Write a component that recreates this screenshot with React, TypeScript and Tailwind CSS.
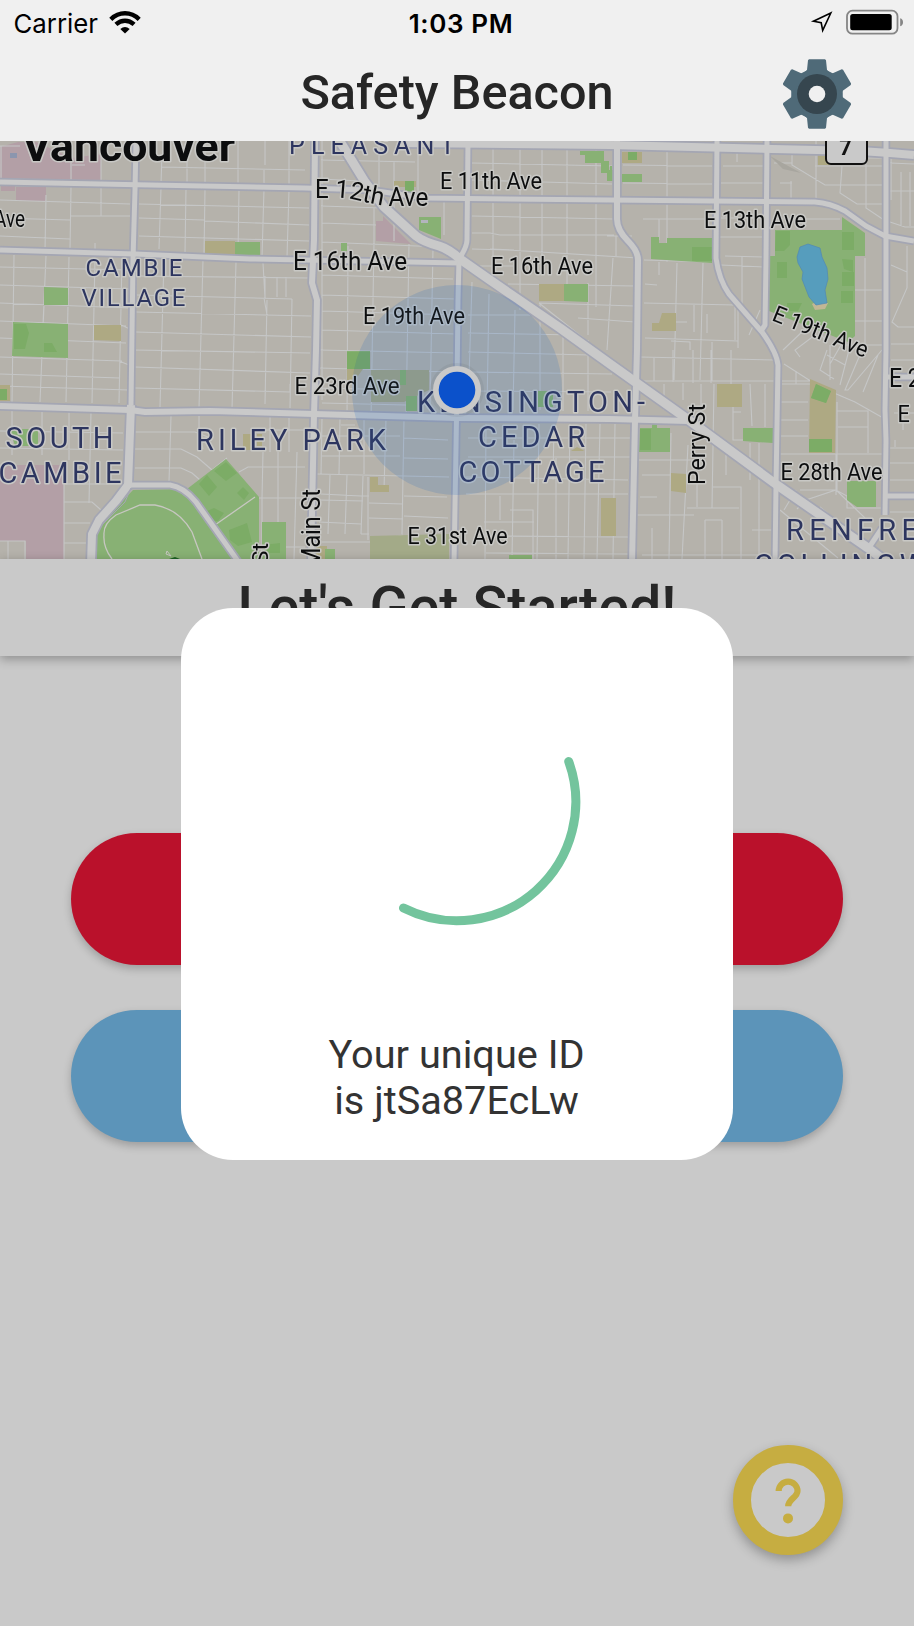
import React from "react";

const parks = [
  "M235 242H260V255H235Z",
  "M44 287L68 288V305H44Z", "M13 322L68 324V358L12 356Z", "M0 389H7V400H0Z", "M10 429H38V446H15Z",
  "M405 181H414V193H405Z", "M419 217H441V239L419 230Z", "M341 243H347V251H341Z", "M564 284H588V302L564 301Z",
  "M580 151H604V161H609V170H614V181H607V173H601V163H585V155H580Z", "M610 166H612V181H610Z", "M622 174H642V182H622Z",
  "M628 152H637V160H628Z", "M651 237H659V243H667V238H712V263L651 259Z",
  "M775 230H842V217L865 233V256H855V336L848 342L769 311V256H775Z",
  "M347 351H370V369H347Z", "M406 396H417V411H406Z", "M400 370H406V385H400Z", "M538 391H553V407H538Z",
  "M640 428H652V424H657V428H670V452H639Z", "M743 428H773V443L743 441Z", "M816 384L831 391L826 403L811 398Z",
  "M809 439H832V452H809Z", "M847 481H876V507H857L847 500Z",
  "M187 489L226 459L259 497V559H97V535L105 519L133 490Z", "M262 522H286V559H262Z", "M509 555H532V559H509Z", "M325 549H335V559H325Z",
];
const darkParks = [
  "M14 324H26L29 333L25 349H14Z", "M44 343H52L57 352H44Z", "M692 247H712V261H692Z",
  "M776 231H790V245L784 251H775Z", "M777 262H787V278H777Z", "M842 232H854V250H842Z", "M842 259L853 260V272L844 269Z",
  "M842 272H854V286H842Z", "M841 291H853V303H841Z", "M787 303H802L798 311H787Z",
  "M347 352H370V369H347Z", "M640 429H651V450H640Z", "M199 484L207 475L217 487L209 496Z", "M214 471L226 462L237 473L226 481Z",
  "M237 493L243 487L249 493L244 500Z", "M205 512L214 508L224 513L218 521H205Z", "M229 530L247 523L252 542L238 546L230 540Z",
  "M263 545L280 543V553H263Z", "M816 384L831 391L826 403L811 398Z", "M809 439H832V452H809Z", "M405 181H414V193H405Z",
  "M628 152H637V160H628Z", "M0 389H7V400H0Z",
];
const sand = [
  "M205 241H235V254H205Z", "M94 325H121V341L94 340Z", "M0 385H10V401H0Z", "M394 181H416V187H394Z", "M539 284H564V301H539Z",
  "M622 152H642V163H622Z", "M818 151H840V165H818Z", "M652 323H659L662 313H676V331H652Z", "M717 384H742V407H717Z",
  "M810 379L836 390L835 453H809Z", "M671 473L686 474V493L671 491Z", "M601 498H616V536H601Z", "M370 477H378V485H389V492H370Z",
  "M347 369H363L355 380H347Z", "M243 434H251V450H243Z", "M257 434H262V446H257Z", "M577 447L583 450L584 451H571Z", "M314 546H327V559H314Z",
];
const pinks = [
  "M0 147L18 142H36L72 158L101 154V181L0 178Z", "M1 185H15V191H1Z", "M16 187H46V201H16Z",
  "M376 221H383V216L411 244L376 241Z", "M0 465H64V559H26V541H0Z",
];
const minor = [
  "M1 146V178M71 141V180M101 141V181M0 146H20M72 165H85",
  "M46 195L45 251M71 187L70 250M101 187V216M0 200L130 204M0 218L70 220M71 216H130M0 236L70 239M95 243V249",
  "M162 154L161 183M187 141V183M205 141V183M238 141V185M265 141V165M289 141V186M162 167L305 170M264 170V184",
  "M161 188L159 249M186 188L185 253M205 189L204 255M239 189L238 255M264 189L262 257M289 190L287 258M139 204L309 208M139 218L204 220M205 221L309 225M139 236L309 241",
  "M14 255L12 402M46 256L43 325M44 305L40 402M69 257L66 402M95 258L92 403M122 259L119 403M0 267L130 270M0 285L130 289M0 303L130 308M0 321L126 326M0 338L126 343M0 357L122 361M0 374L120 378M0 386L129 390",
  "M164 258L160 407M203 260L199 408M236 262L232 409M263 263L265 298M267 300L265 404M292 299L290 408M137 276L309 278M137 295L292 299M136 312L311 316M136 332L311 337M134 350L310 353M135 367L310 373M135 388L290 392M265 276V298M277 277V297M286 277V297M121 325L130 329M119 361L129 365M290 392V384M264 298L267 315",
  "M12 411V455M42 412V455M69 412V460M91 412L89 503M0 431L123 433M0 448L123 450M64 484L130 484M64 484V559M64 502H92L101 510M64 523H90M64 543H88M0 541H25V559M8 541V559",
  "M171 416L169 482M199 416V434L203 449M135 432H195L208 437M135 449H181L197 457L212 470M135 468H181L192 473L200 480M212 470L222 462L227 458M226 460L256 498H305M262 498V559M239 472L248 467H305M263 452L262 498M278 452V522M297 452L294 559M263 430H305M270 417V452M289 417V452M286 547H305",
  "M322 141V400M379 141V205M394 162V241M418 154V200M321 160L415 162M321 179L360 181M321 206L383 208M374 208V243M348 246L347 420M322 223L376 225M322 242L441 247M321 258L453 260M322 275L453 279M322 295L456 299M322 311L456 315M322 330L457 334M319 350L457 353M319 368L457 372M322 388L406 390M322 403L406 405",
  "M374 242L371 420M409 244L406 420M433 248L430 410M444 201V235M493 149V278M520 149V310M542 149V270M567 149V296M596 150V307M472 163L612 166M472 180L612 184M472 216L613 219M472 233H490L500 235L614 235M472 249L508 250L638 258M490 249L514 250M475 266H515M508 284L635 286M539 303L635 306M539 303L611 360M578 318L635 322M588 283V335",
  "M472 282L468 410M489 294L487 410M515 310L513 410M540 303V410M563 324V411M588 340V411M468 315H530M468 333L577 335M468 352L590 355M468 372L612 374M468 391L611 392",
  "M322 418L321 474M340 418L339 474M341 425H355M364 418V474M386 418L384 490M404 419L402 534M322 436H400M322 456H400M317 474L449 477M321 494L361 496M330 475L328 534M347 475L345 534M363 476L361 534M368 477V540M319 500L363 501M319 522L361 524M361 496H369M361 534H369M369 503L403 504M369 518L403 519M404 496L447 497M404 516L448 518M404 438L448 440M404 458L448 459M322 542H370L403 535",
  "M486 424L485 559M514 440L512 559M539 424L537 559M554 424L553 480M570 424L568 559M586 424L584 559M600 424L597 559M615 424L613 559M468 438H630M468 457H630M556 458V559M466 494H628M466 477L628 480M510 510H533V559M484 522H534M500 496V520M486 536L628 537M486 553L628 554",
  "M667 151V262M623 165L712 166M623 183L712 184M643 219L712 219M659 219V240M723 166H763M737 153V162M721 183H763M780 183H792M721 218H763M720 237H763M725 256L763 257M721 265L765 267M791 181V200M816 141V200M792 153V165L825 185H882M815 166H882M842 166L840 193L857 204H882M866 158V208L884 220M774 163H792M862 141V158H882M778 219H840",
  "M607 236H632M616 236V256M613 258L607 350M644 260L712 262M659 262V275M677 263L674 380M703 263L700 380M742 257V304M645 284L657 285M644 303L735 305M645 338L738 341M707 314V333M694 304V332M738 305V348M735 305V340M749 335L760 310M671 341L690 342V350M712 342V381M672 322H687",
  "M640 357L775 360M654 357V381M673 350V382M693 350V383M711 350V383M731 350V384M642 381H811M664 384V410M683 383V400M701 384V430M714 384L712 508M750 384L752 426M765 384V427M733 406V440H744M733 412H741M726 455V475M750 443V480M639 460H694M671 433L669 559M688 445L682 559M713 487H741V559M642 475H671M640 497H657M637 515H694M652 528V559M705 520V559M722 520V559M705 520H722M697 475V507M687 508H739M759 443V559M752 530H774M642 555H770",
  "M815 335L795 350L800 357M784 364L820 387L855 402L885 419M780 384H811M796 371V384M780 402H808M780 420H808M780 436H808M837 402V490M837 411H868V453M838 427H868M780 454H882M836 454V495M800 490H836L847 496V508H882M797 509L806 500L836 490L865 518M796 490L784 510M820 507L882 559M780 510L804 530L838 558M827 350L820 370L834 379M827 355L845 365M849 350L840 385M862 350L845 390H848L882 350M878 355L863 392M783 350L804 330L815 325L825 340",
  "M891 150V200M914 164L890 163M890 191H914M901 172V226M890 222L905 227H914M910 172V226M907 246V288L892 322L898 327H914M891 265L907 272M891 344H914M891 360H914M894 413H914M895 440V447M890 448H914M890 463H914M890 480H914M890 512H914M903 412V430M855 290H882M855 321H882M865 258V350M842 345H882M830 345V380M841 345L830 364",
];
const roads = [
  { w: 8, d: "M400 143L610 145L860 151L890 153L914 155" },
  { w: 5, d: "M136 141L135 190L133 260L131 405" },
  { w: 8, d: "M131 405L128 485L116 501L99 520L92 534L91 564" },
  { w: 5, d: "M0 182L150 185L305 188L370 190L425 198L610 200L815 202Q830 203 845 211L866 226L885 236L914 241" },
  { w: 5, d: "M0 250L135 254L250 259L305 260L460 263" },
  { w: 6, d: "M315 141L314 240L312 283L317 300L316 350L314 414L311 564" },
  { w: 6, d: "M0 406L130 410L145 412L210 411L314 414L455 418L610 419L688 421" },
  { w: 5, d: "M468 141L467 240Q467 247 459 259L458 300L457 390L454 564" },
  { w: 6, d: "M617 141V219Q617 230 628 241Q638 251 638 260L637 350L635 420L632 564" },
  { w: 5, d: "M717 141L716 258Q719 280 729 294L762 332Q777 353 778 365L776 486L775 564" },
  { w: 5, d: "M767 141L766 260L765 325L761 331" },
  { w: 5, d: "M886 141V350L885 410L886 440L885 515M885 496H914M885 377H914" },
  { w: 5, d: "M128 485H170Q184 487 196 502L240 564" },
  { w: 5, d: "M868 549L882 528" },
  { w: 9, d: "M333 130L365 182L384 207L416 236Q424 242 439 246Q449 249 460 259L490 280L560 328L610 364L690 421L777 485L868 548L889 564" },
];

type Label = { t: string; x: number; y: number; w: number; s?: number; r?: number; k?: "hood" | "city" };
const labels: Label[] = [
  { t: "Vancouver", x: 22, y: 161, w: 213, s: 42, k: "city" },
  { t: "PLEASANT", x: 289, y: 154, w: 166, s: 25, k: "hood" },
  { t: "CAMBIE", x: 85.5, y: 276, w: 97, s: 24, k: "hood" },
  { t: "VILLAGE", x: 81.5, y: 305.5, w: 104, s: 24, k: "hood" },
  { t: "SOUTH", x: 5.5, y: 447.5, w: 108, s: 29, k: "hood" },
  { t: "CAMBIE", x: -1.5, y: 482.5, w: 123, s: 29, k: "hood" },
  { t: "RILEY PARK", x: 196, y: 450, w: 190, s: 29, k: "hood" },
  { t: "KENSINGTON-", x: 417, y: 411.5, w: 228, s: 29, k: "hood" },
  { t: "CEDAR", x: 478, y: 446.5, w: 107, s: 29, k: "hood" },
  { t: "COTTAGE", x: 458.5, y: 481.5, w: 146, s: 29, k: "hood" },
  { t: "RENFREW", x: 786, y: 539.5, w: 163, s: 29, k: "hood" },
  { t: "COLLINGWOOD", x: 754, y: 575, w: 242, s: 29, k: "hood" },
  { t: "Ave", x: -6, y: 226.5, w: 31 },
  { t: "E 11th Ave", x: 440, y: 189, w: 102 },
  { t: "E 16th Ave", x: 293, y: 270, w: 114, s: 25 },
  { t: "E 16th Ave", x: 491, y: 273.5, w: 102 },
  { t: "E 13th Ave", x: 704, y: 227.5, w: 102 },
  { t: "E 19th Ave", x: 363, y: 323.5, w: 102 },
  { t: "E 23rd Ave", x: 294.5, y: 393.5, w: 105 },
  { t: "E 28th Ave", x: 780.5, y: 480, w: 102 },
  { t: "E 31st Ave", x: 407.5, y: 544, w: 100 },
  { t: "E 19th Ave", x: 771, y: 320, w: 101, s: 23, r: 22 },
  { t: "E 22nd Ave", x: 889, y: 387, w: 114, s: 25 },
  { t: "E 24th Ave", x: 897.5, y: 421.5, w: 102 },
  { t: "Perry St", x: 705, y: 485, w: 81, s: 24, r: -90 },
  { t: "Main St", x: 320, y: 568, w: 79, s: 25, r: -90 },
  { t: "Ontario St", x: 268, y: 645, w: 102, s: 22, r: -90 },
];

function MapLabel({ t, x, y, w, s = 23, r = 0, k }: Label) {
  return (
    <text
      x={x}
      y={y}
      fontSize={s}
      fontWeight={k === "city" ? 700 : 400}
      fill={k === "hood" ? "#2d355f" : "#0c0d0e"}
      stroke="#c8c8c5"
      strokeWidth={3}
      strokeLinejoin="round"
      paintOrder="stroke"
      transform={r ? `rotate(${r} ${x} ${y})` : undefined}
      textLength={w}
      lengthAdjust={k === "hood" ? "spacing" : "spacingAndGlyphs"}
    >
      {t}
    </text>
  );
}

function CityMap() {
  return (
    <svg viewBox="0 141 914 418" className="isolate block h-[418px] w-full shrink-0 font-['Roboto',sans-serif]">
      <rect y="141" width="914" height="418" fill="#b5b2ab" />
      <path d={pinks.join("")} fill="#b39fa6" />
      <path d={minor.join("")} fill="none" stroke="#c5c6c6" strokeWidth="1.1" />
      <path d="M370 536L449 534V559H370Z" fill="#a3aa88" />
      <path d="M371 370H429V390L404 402H371Z" fill="#a4a587" />
      <path d={sand.join("")} fill="#aea983" />
      <path d={parks.join("")} fill="#88b174" />
      <path d={darkParks.join("")} fill="#7cac66" />
      <path d="M770 156L790 167L801 173L783 169Z" fill="#a8a69f" />
      <path d="M10 153H17V158H10Z" fill="#8c96ae" />
      <path d="M421 220H428V223H421Z" fill="#b3b5bd" />
      <path d="M104 535Q103 524 116 515L140 505H155Q179 509 192 532L202 559M104 535Q103 547 112 559M215 525L255 497" fill="none" stroke="#c7c7c1" strokeWidth="1.3" />
      <path d="M169 559L175 557L180 559Z" fill="#1c6222" />
      <path d="M167 551L171 556L166 554Z" fill="none" stroke="#c7c7c1" />
      <path d="M812 304L816 302L828 303L825 309L815 310Z" fill="#c1b795" />
      <path d="M800 247L808 244L820 248L822 257L827 268L828 279L825 290L827 303L816 305L809 297L802 279L803 272L798 263L797 257Z" fill="#569dbd" stroke="#5188b5" strokeWidth=".7" />
      <g fill="none" strokeLinejoin="round">
        {roads.map((r) => <path key={r.d} d={r.d} stroke="#a4a6b3" strokeWidth={r.w + 3.5} />)}
        {roads.map((r) => <path key={r.d} d={r.d} stroke="#c9c9c9" strokeWidth={r.w} />)}
      </g>
      <path d="M102 525L125 502L131 488" fill="none" stroke="#a4a6b3" strokeWidth="1" />
      <rect x="826" y="124" width="41" height="40" rx="5" fill="#c9c9c9" stroke="#111" strokeWidth="2" />
      <text x="845.5" y="155" fontSize="22" fontWeight="700" textAnchor="middle" fill="#111">7</text>
      {labels.map((l) => <MapLabel key={`${l.t}${l.x}`} {...l} />)}
      <path id="e12" d="M315 197.5L338 197.5Q350 198 362 201.5L380 205Q386 206 396 206L440 206" fill="none" />
      <text fontSize="25" fill="#0c0d0e" stroke="#c8c8c5" strokeWidth="3" strokeLinejoin="round" paintOrder="stroke">
        <textPath href="#e12" textLength="114" lengthAdjust="spacingAndGlyphs">E 12th Ave</textPath>
      </text>
      <circle cx="457" cy="390" r="105" fill="#e0edff" className="mix-blend-multiply" />
      <circle cx="457" cy="390" r="105" fill="#6fa4dc" fillOpacity=".08" />
      <circle cx="457" cy="390" r="27" fill="#333" fillOpacity=".07" />
      <circle cx="457" cy="390" r="24" fill="#c9c9c9" />
      <circle cx="457" cy="390" r="18.3" fill="#0b51cb" />
    </svg>
  );
}

function StatusBar() {
  return (
    <div className="flex h-11 items-center justify-between pr-[10px] pl-[14px] font-['Inter',sans-serif] text-[26px] leading-none text-black">
      <div className="flex flex-1 items-center gap-[10px] pt-[3px]">
        <svg className="order-2 -mt-[3px] h-[23px] w-8" viewBox="0 0 32 23">
          <g fill="none" stroke="#000" strokeWidth="4.4">
            <path d="M1.8 8.3Q8 2.3 16 2.3T30.2 8.3" />
            <path d="M6.9 13.4Q11 9.7 16 9.7T25.1 13.4" />
          </g>
          <path d="M11.3 18Q16 13.8 20.7 18L16 22.6Z" />
        </svg>
        <svg className="h-[30px] w-[85px] overflow-visible" viewBox="0 0 85 30">
          <text x="-0.5" y="23.5" textLength="84.5" lengthAdjust="spacingAndGlyphs">Carrier</text>
        </svg>
      </div>
      <span className="pt-[3px] pl-1 text-[26px] font-semibold tracking-[0.6px]">1:03 PM</span>
      <div className="flex flex-1 items-center justify-end gap-[13px]">
        <svg className="mt-[1px] h-[23px] w-[23px]" viewBox="0 0 23 23">
          <path d="M20.8 2L3.4 10.2L11.2 11.8L12.7 19.4Z" fill="none" stroke="#000" strokeWidth="1.6" />
        </svg>
        <svg className="h-[26px] w-[58px]" viewBox="0 0 58 26">
          <rect x="1" y="1.7" width="50.5" height="23" rx="5.5" fill="none" stroke="#858585" strokeWidth="1.8" />
          <rect x="4.2" y="5" width="41.5" height="16.3" rx="2.5" />
          <path d="M54.2 9.2Q57 10 57 13.2T54.2 17.2Z" fill="#858585" />
        </svg>
      </div>
    </div>
  );
}

function GearIcon() {
  return (
    <svg className="h-[70px] w-[70px]" viewBox="-35 -35 70 70">
      <g fill="#4f6a78">
        <circle r="25.8" />
        {[0, 60, 120, 180, 240, 300].map((a) => (
          <path key={a} d="M-8 -34.7H8L9 -33.8L10 -24L13 -21H-13L-10 -24L-9 -33.8Z" transform={`rotate(${a})`} />
        ))}
      </g>
      <circle r="20" fill="#36464f" />
      <circle r="8.3" fill="#f0f0f0" />
    </svg>
  );
}

export default function App() {
  return (
    <div className="relative flex h-[1626px] w-[914px] flex-col overflow-hidden bg-[#c9c9c9] font-['Roboto',sans-serif] text-[#262626]">
      <header className="h-[141px] shrink-0 bg-[#f0f0f0]">
        <StatusBar />
        <div className="grid h-[97px] grid-cols-[1fr_auto_1fr] items-center">
          <h1 className="col-start-2 pt-[2px] text-[48.6px] leading-none font-medium">Safety Beacon</h1>
          <button className="mt-[3px] mr-[62px] justify-self-end" aria-label="Settings"><GearIcon /></button>
        </div>
      </header>
      <CityMap />
      <section className="z-10 h-[97px] shrink-0 bg-[#c9c9c9] pt-[14px] text-center shadow-[0_3px_10px_rgba(0,0,0,0.3)]">
        <h2 className="text-[57.4px] leading-[70px] font-medium">Let's Get Started!</h2>
      </section>
      <main className="flex flex-col gap-[45px] px-[71px] pt-[177px]">
        <button className="h-[132px] rounded-full bg-[#ba112b] shadow-[0_4px_8px_rgba(0,0,0,0.22)]" />
        <button className="h-[132px] rounded-full bg-[#5c94b9] shadow-[0_4px_8px_rgba(0,0,0,0.22)]" />
      </main>
      <button className="absolute right-[71px] bottom-[71px] flex h-[110px] w-[110px] items-center justify-center rounded-full border-[18px] border-[#c6ad41] bg-[#c9c9c9] shadow-[0_5px_12px_rgba(0,0,0,0.28)]" aria-label="Help">
        <svg className="h-[74px] w-[74px] shrink-0" viewBox="0 0 74 74">
          <path d="M27.7 28A9.4 9.4 0 0 1 46.5 28C46.5 34.5 37.2 36 37.2 43.3" fill="none" stroke="#c6ad41" strokeWidth="6.2" />
          <circle cx="37" cy="55.4" r="5" fill="#c6ad41" />
        </svg>
      </button>
      <div role="dialog" className="absolute top-[608px] left-[181px] z-20 flex h-[552px] w-[552px] flex-col items-center rounded-[52px] bg-white pt-[70px]">
        <svg className="h-[248px] w-[248px]" viewBox="-124 -124 248 248">
          <path d="M111.7 -40.5A118.8 118.8 0 0 1 -53.5 106" fill="none" stroke="#73c49d" strokeWidth="9" strokeLinecap="round" />
        </svg>
        <p className="mt-[106px] pr-[1px] text-center text-[39.7px] leading-[46px] text-[#333]">Your unique ID<br />is jtSa87EcLw</p>
      </div>
    </div>
  );
}
